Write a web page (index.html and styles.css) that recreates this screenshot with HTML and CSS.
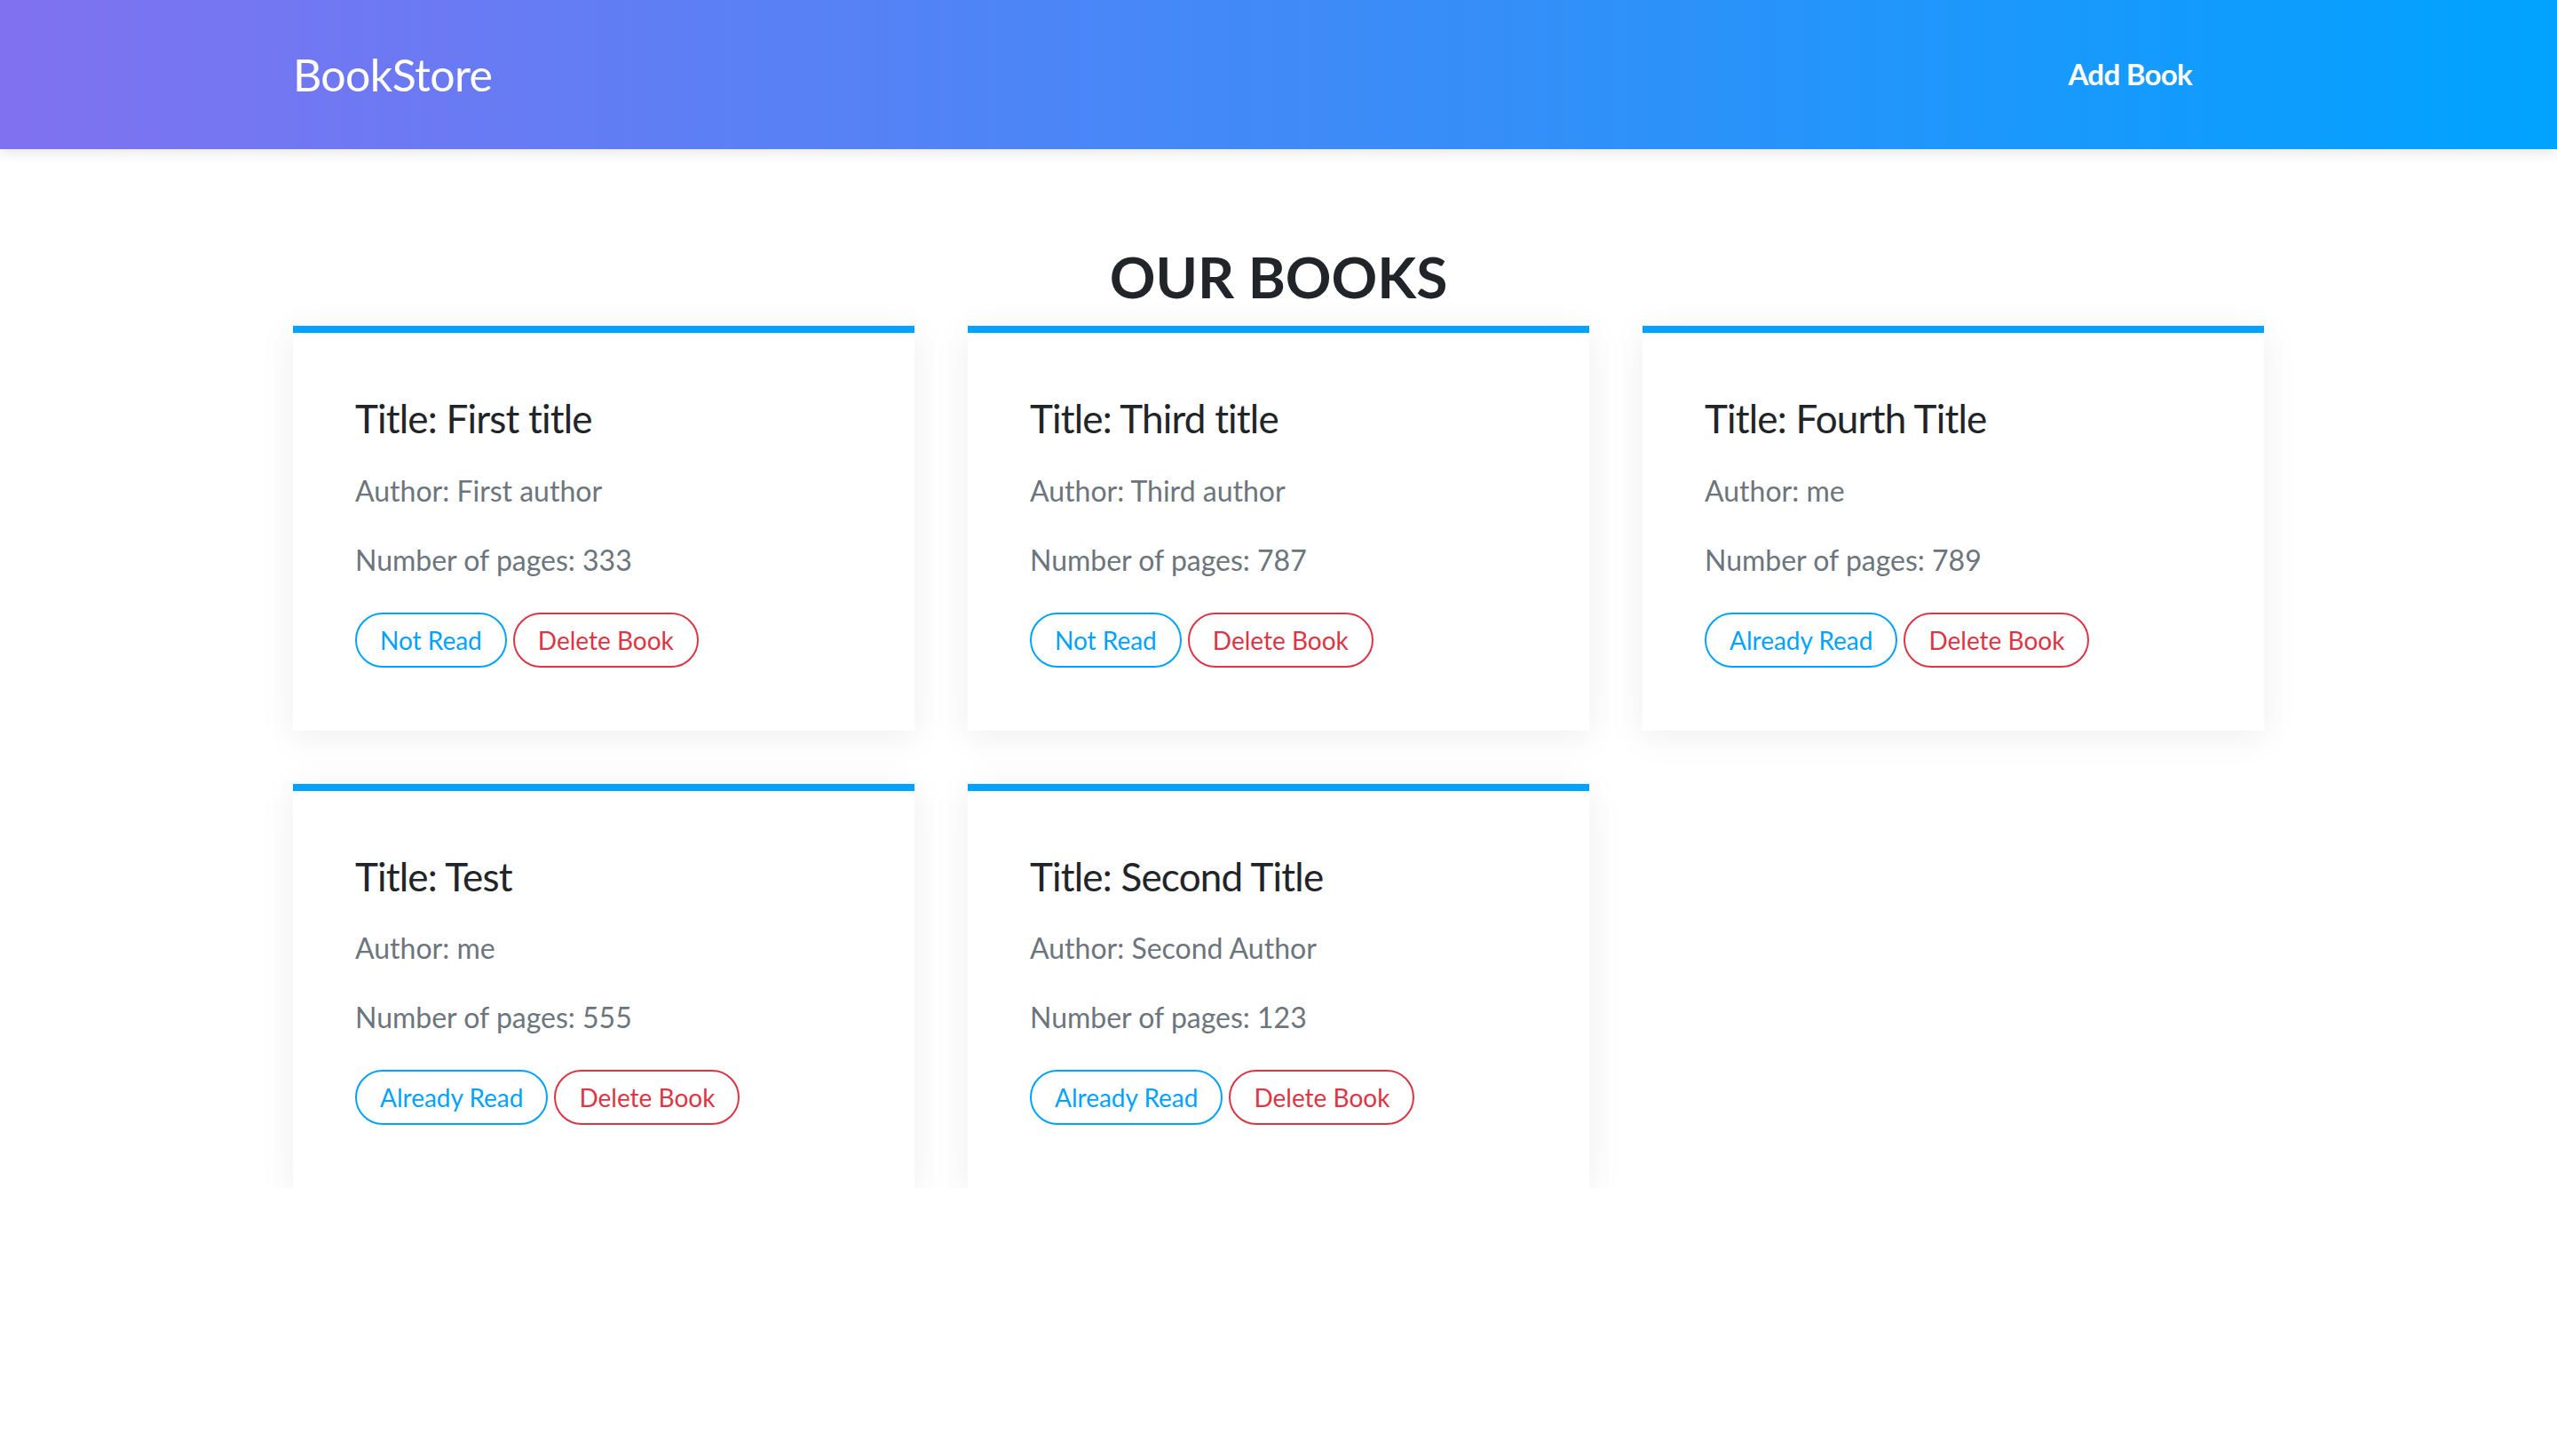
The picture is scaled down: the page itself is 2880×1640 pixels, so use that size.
FILE: index.html
```html
<!DOCTYPE html>
<html lang="en">
<head>
<meta charset="utf-8">
<title>BookStore</title>
<link rel="stylesheet" href="styles.css">
</head>
<body>
<header class="navbar">
  <div class="nav-inner">
    <a class="brand" href="#">BookStore</a>
    <a class="nav-link" href="#">Add Book</a>
  </div>
</header>
<main class="content">
  <h2 class="page-title">OUR BOOKS</h2>
  <div class="book-grid">
    <div class="book-card">
      <h4 class="book-title">Title: First title</h4>
      <p class="book-meta">Author: First author</p>
      <p class="book-meta">Number of pages: 333</p>
      <div class="actions">
        <button class="pill pill-blue">Not Read</button>
        <button class="pill pill-red">Delete Book</button>
      </div>
    </div>
    <div class="book-card">
      <h4 class="book-title">Title: Third title</h4>
      <p class="book-meta">Author: Third author</p>
      <p class="book-meta">Number of pages: 787</p>
      <div class="actions">
        <button class="pill pill-blue">Not Read</button>
        <button class="pill pill-red">Delete Book</button>
      </div>
    </div>
    <div class="book-card">
      <h4 class="book-title">Title: Fourth Title</h4>
      <p class="book-meta">Author: me</p>
      <p class="book-meta">Number of pages: 789</p>
      <div class="actions">
        <button class="pill pill-blue">Already Read</button>
        <button class="pill pill-red">Delete Book</button>
      </div>
    </div>
    <div class="book-card">
      <h4 class="book-title">Title: Test</h4>
      <p class="book-meta">Author: me</p>
      <p class="book-meta">Number of pages: 555</p>
      <div class="actions">
        <button class="pill pill-blue">Already Read</button>
        <button class="pill pill-red">Delete Book</button>
      </div>
    </div>
    <div class="book-card">
      <h4 class="book-title">Title: Second Title</h4>
      <p class="book-meta">Author: Second Author</p>
      <p class="book-meta">Number of pages: 123</p>
      <div class="actions">
        <button class="pill pill-blue">Already Read</button>
        <button class="pill pill-red">Delete Book</button>
      </div>
    </div>
  </div>
</main>
</body>
</html>
```

FILE: styles.css
```css
* { box-sizing: border-box; }

html, body {
  margin: 0;
  padding: 0;
  background: #ffffff;
  font-family: Lato, "Open Sans", "Noto Sans", sans-serif;
  color: #212529;
}

.navbar {
  height: 168px;
  background: linear-gradient(to right, #8071f0 0%, #00a3ff 100%);
  box-shadow: 0 4px 14px rgba(0, 0, 0, 0.1);
  position: relative;
  z-index: 1;
}

.nav-inner {
  width: 2220px;
  height: 100%;
  margin: 0 auto;
  display: flex;
  align-items: center;
  justify-content: space-between;
}

.brand {
  color: #ffffff;
  text-decoration: none;
  font-size: 50px;
  line-height: 1.2;
  font-weight: 400;
  letter-spacing: -0.6px;
}

.nav-link {
  color: #ffffff;
  text-decoration: none;
  font-size: 33px;
  line-height: 1.2;
  font-weight: 700;
  letter-spacing: -0.7px;
  margin-right: 81px;
}

.content {
  width: 2220px;
  margin: 0 auto;
  padding-top: 106px;
}

.page-title {
  margin: 0 0 16px;
  text-align: center;
  font-size: 64px;
  line-height: 1.2;
  font-weight: 700;
  color: #212529;
}

.book-grid {
  display: grid;
  grid-template-columns: repeat(3, 700px);
  column-gap: 60px;
  row-gap: 60px;
}

.book-card {
  background: #ffffff;
  border-top: 8px solid #00a2ff;
  padding: 70px 70px 71px;
  box-shadow: 0 6px 40px rgba(0, 0, 0, 0.07);
}

.book-title {
  margin: 0 0 31px;
  font-size: 44px;
  line-height: 1.2;
  font-weight: 400;
  letter-spacing: -0.8px;
  color: #212529;
}

.book-meta {
  margin: 0 0 30px;
  font-size: 32px;
  line-height: 1.5;
  color: #6c757d;
}

.book-meta + .book-meta {
  margin-bottom: 35px;
}

.actions {
  display: flex;
  gap: 7px;
}

.pill {
  font-family: inherit;
  font-size: 28px;
  line-height: 1.5;
  padding: 8px 26px;
  border-radius: 999px;
  background: #ffffff;
  border: 2px solid currentColor;
  cursor: pointer;
}

.pill-blue { color: #00a2ff; }
.pill-red { color: #dc3545; }
```
